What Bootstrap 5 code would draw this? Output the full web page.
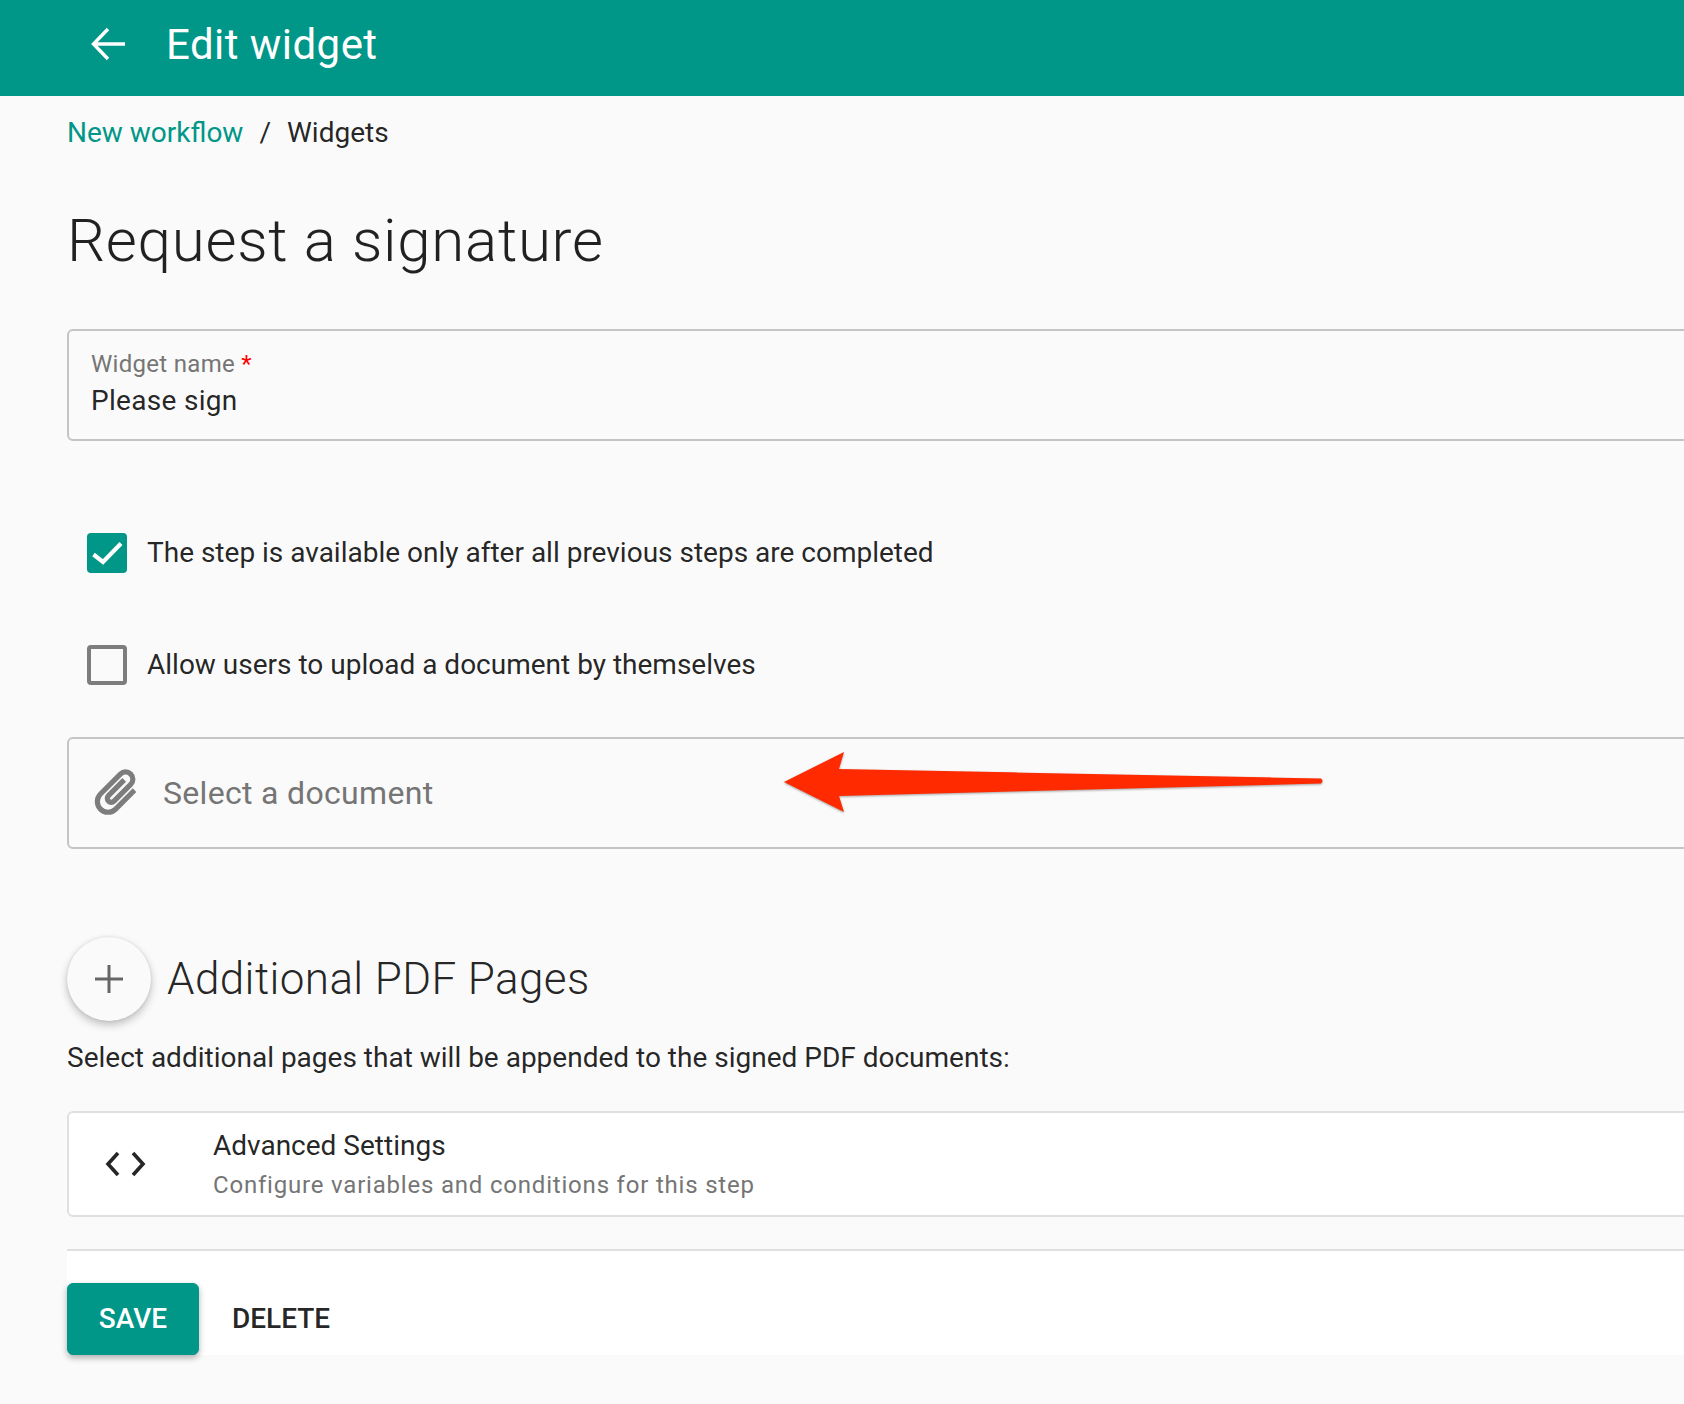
<!DOCTYPE html>
<html lang="en"><head><meta charset="utf-8"><title>Edit widget</title>
<link href="https://cdn.jsdelivr.net/npm/bootstrap@5.3.0/dist/css/bootstrap.min.css" rel="stylesheet">
<style>
html,body{height:100%}
body{background:#fafafa;font-family:Roboto,"Liberation Sans",sans-serif;color:rgba(0,0,0,.87);overflow:hidden;font-size:28px}
.topbar{background:#009688;height:96px;padding:0 0 8px 90px;color:#fff}
.topbar .bar-title{font-size:42px;margin:2px 0 0 38px;letter-spacing:.45px;line-height:1;color:#fff;padding:0}
.sheet{position:relative;padding-left:67px}
.crumbs{margin:0;height:72px;padding-top:17px;--bs-breadcrumb-divider-color:rgba(0,0,0,.87);--bs-breadcrumb-item-padding-x:16px;font-size:28px;line-height:40px}
.crumbs a{color:#009688;text-decoration:none}
.crumbs .breadcrumb-item.active{color:rgba(0,0,0,.87)}
.page-head{font-size:60px;font-weight:300;line-height:72px;margin:37px 0 0;letter-spacing:.72px}
.name-box{margin:52px -10px 0 0;height:112px;border:2px solid #c4c4c4;border-radius:6px;padding:19px 0 0 22px}
.name-label{font-size:24px;line-height:28px;color:#757575;letter-spacing:.3px}
.name-label span{color:#f00}
.name-value{font-size:28px;line-height:36px;margin-top:5px;letter-spacing:.3px}
.tick-row{padding-left:20px;height:40px;gap:20px;line-height:40px}
.tick-one{margin-top:92px}
.tick-two{margin-top:72px}
.tick-box{width:40px;height:40px;border-radius:4px;flex:none}
.tick-on{background:#009688}
.tick-off{border:4px solid #7d7d7d}
.doc-box{margin:52px -10px 0 0;height:112px;border:2px solid #c4c4c4;border-radius:6px;padding:0 0 0 20px;gap:20px;color:#757575;font-size:32px;letter-spacing:.32px}
.doc-clip{margin-top:-2px}
.add-row{margin-top:88px;height:84px;gap:16px}
.fab-btn{width:84px;height:84px;border-radius:50%;background:#fafafa;box-shadow:0 4px 8px rgba(0,0,0,.24),0 0 3px rgba(0,0,0,.1);border:0;flex:none;padding:0}
.add-head{font-size:44px;font-weight:300;line-height:60px;margin:0;letter-spacing:.4px}
.add-note{margin:17px 0 0;line-height:40px}
.adv-card{margin:33px -10px 0 0;height:106px;background:#fff;border:2px solid #e0e0e0;border-radius:6px;padding-left:36px;gap:67px}
.adv-name{font-size:28px;line-height:36px}
.adv-sub{font-size:24px;line-height:30px;color:#757575;letter-spacing:.8px;margin-top:6px}
.foot-row{margin-top:32px;height:106px;background:#fff;border-top:2px solid #e0e0e0;padding-top:32px;gap:32px}
.save-btn{--bs-btn-bg:#009688;--bs-btn-color:#fff;--bs-btn-border-color:#009688;--bs-btn-hover-bg:#009688;--bs-btn-hover-color:#fff;width:132px;height:72px;font-size:28px;font-weight:500;border-radius:6px;box-shadow:0 3px 6px rgba(0,0,0,.3);padding:0}
.del-btn{--bs-btn-border-color:transparent;--bs-btn-color:rgba(0,0,0,.87);font-size:28px;font-weight:500;padding:0}
.mark-arrow{position:absolute;left:760px;top:634px;filter:drop-shadow(0 1px 1px rgba(0,0,0,.35))}
</style></head>
<body>
<nav class="navbar topbar d-flex justify-content-start flex-nowrap">
  <svg width="38" height="40" viewBox="0 0 38 40" fill="none" stroke="#fff" stroke-width="3.4"><path d="M35 20H5M18 5L3.500 20l14.500 15"/></svg>
  <span class="navbar-brand bar-title">Edit widget</span>
</nav>
<main class="sheet">
  <ol class="breadcrumb crumbs"><li class="breadcrumb-item"><a href="#">New workflow</a></li><li class="breadcrumb-item active">Widgets</li></ol>
  <h1 class="page-head">Request a signature</h1>
  <div class="name-box">
    <div class="name-label">Widget name <span>*</span></div>
    <div class="name-value">Please sign</div>
  </div>
  <div class="tick-row tick-one d-flex align-items-center">
    <span class="tick-box tick-on d-block"><svg class="d-block" width="40" height="40" viewBox="0 0 40 40" fill="none" stroke="#fff" stroke-width="4.2"><path d="M6.500 21.500l9.500 7.500L34 10.500"/></svg></span>
    <span>The step is available only after all previous steps are completed</span>
  </div>
  <div class="tick-row tick-two d-flex align-items-center">
    <span class="tick-box tick-off d-block"></span>
    <span>Allow users to upload a document by themselves</span>
  </div>
  <div class="doc-box d-flex align-items-center">
    <svg class="doc-clip" width="54" height="54" viewBox="0 0 24 24" fill="#7d7d7d" stroke="#7d7d7d" stroke-width=".8"><path transform="rotate(45 12 12)" d="M16.500 6v11.500c0 2.210-1.790 4-4 4s-4-1.790-4-4V5c0-1.380 1.120-2.500 2.500-2.500s2.500 1.120 2.500 2.500v10.500c0 .55-.45 1-1 1s-1-.45-1-1V6H10v9.500c0 1.380 1.120 2.500 2.500 2.500s2.500-1.120 2.500-2.500V5c0-2.210-1.790-4-4-4S7 2.790 7 5v12.500c0 3.040 2.460 5.500 5.500 5.500s5.500-2.460 5.500-5.500V6h-1.500z"/></svg>
    <span>Select a document</span>
  </div>
  <div class="add-row d-flex align-items-center">
    <button class="btn fab-btn d-flex align-items-center justify-content-center" type="button" aria-label="Add"><svg width="28" height="28" viewBox="0 0 28 28" stroke="#666" stroke-width="3"><path d="M14 0v28M0 14h28"/></svg></button>
    <h2 class="add-head">Additional PDF Pages</h2>
  </div>
  <p class="add-note">Select additional pages that will be appended to the signed PDF documents:</p>
  <div class="adv-card d-flex align-items-center">
    <svg width="41" height="26" viewBox="0 0 41 26" fill="none" stroke="#262626" stroke-width="3.600"><path d="M13 2L3 13l10 11M28 2l10 11-10 11"/></svg>
    <div>
      <div class="adv-name">Advanced Settings</div>
      <div class="adv-sub">Configure variables and conditions for this step</div>
    </div>
  </div>
  <div class="foot-row d-flex align-items-start">
    <button class="btn save-btn" type="button">SAVE</button>
    <button class="btn del-btn align-self-center" type="button">DELETE</button>
  </div>
  <svg class="mark-arrow" width="580" height="110" viewBox="760 730 580 110"><path d="M784 782L844 752 839 769 1321 778.500Q1324 781 1321 783.500L839 796 844 812Z" fill="#ff2a00"/></svg>
</main>
<script src="https://cdn.jsdelivr.net/npm/bootstrap@5.3.0/dist/js/bootstrap.bundle.min.js"></script>
</body></html>
